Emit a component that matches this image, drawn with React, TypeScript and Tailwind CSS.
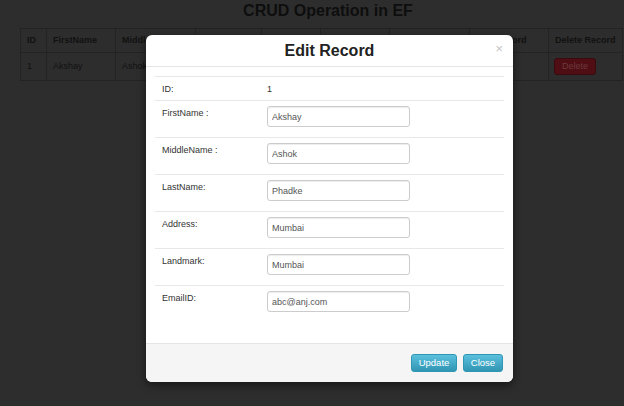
import React from "react";

const font = { fontFamily: '"Liberation Sans", Arial, sans-serif' };

const columns = [
  { name: "ID", w: "w-[26px]" },
  { name: "FirstName", w: "w-[69px]" },
  { name: "MiddleName", w: "w-[80px]" },
  { name: "LastName", w: "w-[66px]" },
  { name: "Address", w: "w-[59px]" },
  { name: "Landmark", w: "w-[69px]" },
  { name: "EmailID", w: "w-[80px]" },
  { name: "Edit Record", w: "w-[79px]" },
  { name: "Delete Record", w: "w-[74px]" },
];

const record = ["1", "Akshay", "Ashok", "Phadke", "Mumbai", "Mumbai", "abc@anj.com"];

const fields = [
  { label: "FirstName :", value: "Akshay" },
  { label: "MiddleName :", value: "Ashok" },
  { label: "LastName:", value: "Phadke" },
  { label: "Address:", value: "Mumbai" },
  { label: "Landmark:", value: "Mumbai" },
  { label: "EmailID:", value: "abc@anj.com" },
];

export default function App() {
  return (
    <div className="relative w-full h-[406px] overflow-hidden bg-[#2d2d2d]" style={font}>
      {/* page behind the backdrop */}
      <h1 className="h-[20px] pt-[1px] pl-[32px] text-center text-[16px] leading-[20px] font-bold text-[#0e0e0e]">
        CRUD Operation in EF
      </h1>
      <table className="ml-[20px] mt-[8px] w-[602px] table-fixed border-collapse border border-[#232323] text-[9px] text-[#111]">
        <thead>
          <tr className="h-[24px]">
            {columns.map((c) => (
              <th key={c.name} className={`${c.w} border border-[#232323] px-[6px] text-left font-bold`}>
                {c.name}
              </th>
            ))}
          </tr>
        </thead>
        <tbody>
          <tr className="h-[28px]">
            {record.map((v, i) => (
              <td key={i} className="border border-[#232323] px-[6px]">
                {v}
              </td>
            ))}
            <td className="border border-[#232323] px-[6px]">
              <button className="h-[17px] w-[34px] rounded-[3px] bg-[#3a3a3a] text-[9px] text-[#222]">Edit</button>
            </td>
            <td className="border border-[#232323] px-[5px]">
              <button className="h-[17px] w-[42px] rounded-[3px] border border-[#3a0a0e] bg-[#4f0e13] text-[9px] text-[#6e3a3e]">
                Delete
              </button>
            </td>
          </tr>
        </tbody>
      </table>

      {/* modal dialog */}
      <div className="absolute left-[146px] top-[35px] w-[367px] rounded-[6px] bg-white shadow-[0_3px_8px_rgba(0,0,0,0.5)]">
        <div className="relative flex h-[32px] items-center justify-center border-b border-[#e5e5e5]">
          <h3 className="text-[16px] font-bold leading-[20px] text-[#222]">Edit Record</h3>
          <span className="absolute right-[10px] top-[6px] text-[13px] leading-[16px] text-[#c4c4c4]">×</span>
        </div>
        <div className="p-[9px]">
          <table className="mb-[12px] w-[349px] table-fixed border-collapse text-[9px] text-[#333]">
            <tbody>
              <tr>
                <td className="w-[105px] border-t border-[#e8e8e8] pl-[7px] pt-[5px] pb-[4px] leading-[14px]">ID:</td>
                <td className="border-t border-[#e8e8e8] pl-[7px] pt-[5px] pb-[4px] leading-[14px]">1</td>
              </tr>
              {fields.map((f) => (
                <tr key={f.label}>
                  <td className="border-t border-[#e8e8e8] pl-[7px] pt-[5px] pb-[4px] align-top leading-[14px]">
                    {f.label}
                  </td>
                  <td className="border-t border-[#e8e8e8] pl-[7px] pt-[5px] pb-[4px] align-top">
                    <input
                      defaultValue={f.value}
                      className="mb-[6px] block h-[21px] w-[143px] rounded-[3px] border border-[#cccccc] px-[4px] text-[9px] text-[#555] shadow-[inset_0_1px_1px_rgba(0,0,0,0.075)] outline-none"
                      style={font}
                    />
                  </td>
                </tr>
              ))}
            </tbody>
          </table>
        </div>
        <div className="flex h-[39px] items-center justify-end gap-[6px] rounded-b-[6px] border-t border-[#e5e5e5] bg-[#f5f5f5] pr-[10px]">
          <button className="h-[18px] w-[46px] rounded-[3px] border border-[#2f96b4] bg-gradient-to-b from-[#5bc0de] to-[#2f96b4] text-[9.5px] text-white">
            Update
          </button>
          <button className="h-[18px] w-[40px] rounded-[3px] border border-[#2f96b4] bg-gradient-to-b from-[#5bc0de] to-[#2f96b4] text-[9.5px] text-white">
            Close
          </button>
        </div>
      </div>
    </div>
  );
}
